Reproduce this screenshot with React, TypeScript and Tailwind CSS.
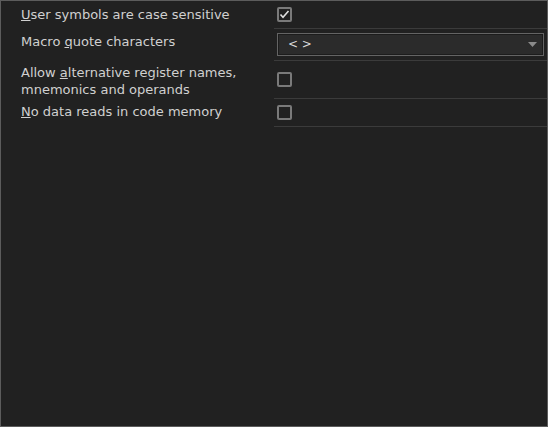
import React from "react";

function CheckBox({ checked }: { checked?: boolean }) {
  return (
    <div className="w-[15px] h-[15px] rounded-[2px] border-2 border-[#7a7a7a] flex items-center justify-center">
      {checked && (
        <svg width="11" height="11" viewBox="0 0 11 11" fill="none">
          <path d="M1.5 5.5 L4 8.2 L9.5 2" stroke="#e0e0e0" strokeWidth="1.6" />
        </svg>
      )}
    </div>
  );
}

function Row({
  label,
  height,
  labelPad,
  children,
}: {
  label: React.ReactNode;
  height: string;
  labelPad: string;
  children: React.ReactNode;
}) {
  return (
    <div className={`flex ${height}`}>
      <div className={`w-[273px] pl-5 ${labelPad}`}>{label}</div>
      <div className="flex-1 border-b border-[#3b3b3b] flex items-center pl-[3px] pr-[3px]">
        {children}
      </div>
    </div>
  );
}

export default function App() {
  return (
    <div
      className="w-[548px] h-[427px] border border-[#5c5c5c] bg-[#212121] text-[#d0d0d0] text-[13px] leading-[15px]"
      style={{ fontFamily: '"DejaVu Sans", Verdana, sans-serif' }}
    >
      <Row
        height="h-[28px]"
        labelPad="pt-[6px]"
        label={
          <span>
            <u>U</u>ser symbols are case sensitive
          </span>
        }
      >
        <CheckBox checked />
      </Row>
      <Row
        height="h-[32px]"
        labelPad="pt-[5px]"
        label={
          <span>
            Macro <u>q</u>uote characters
          </span>
        }
      >
        <div className="w-full h-[23px] border border-[#646464] bg-[#2b2b2b] flex items-center justify-between pl-[10px] pr-[6px] shadow-[inset_0_0_0_1px_#1c1c1c] text-[12px]">
          <span className="text-[#d8d8d8]">&lt; &gt;</span>
          <svg width="9" height="5" viewBox="0 0 9 5">
            <path d="M0 0 H9 L4.5 5 Z" fill="#8a8a8a" />
          </svg>
        </div>
      </Row>
      <Row
        height="h-[38px]"
        labelPad="pt-[3px] leading-[17px]"
        label={
          <span>
            Allow <u>a</u>lternative register names,
            <br />
            mnemonics and operands
          </span>
        }
      >
        <CheckBox />
      </Row>
      <Row
        height="h-[28px]"
        labelPad="pt-[5px]"
        label={
          <span>
            <u>N</u>o data reads in code memory
          </span>
        }
      >
        <CheckBox />
      </Row>
    </div>
  );
}
